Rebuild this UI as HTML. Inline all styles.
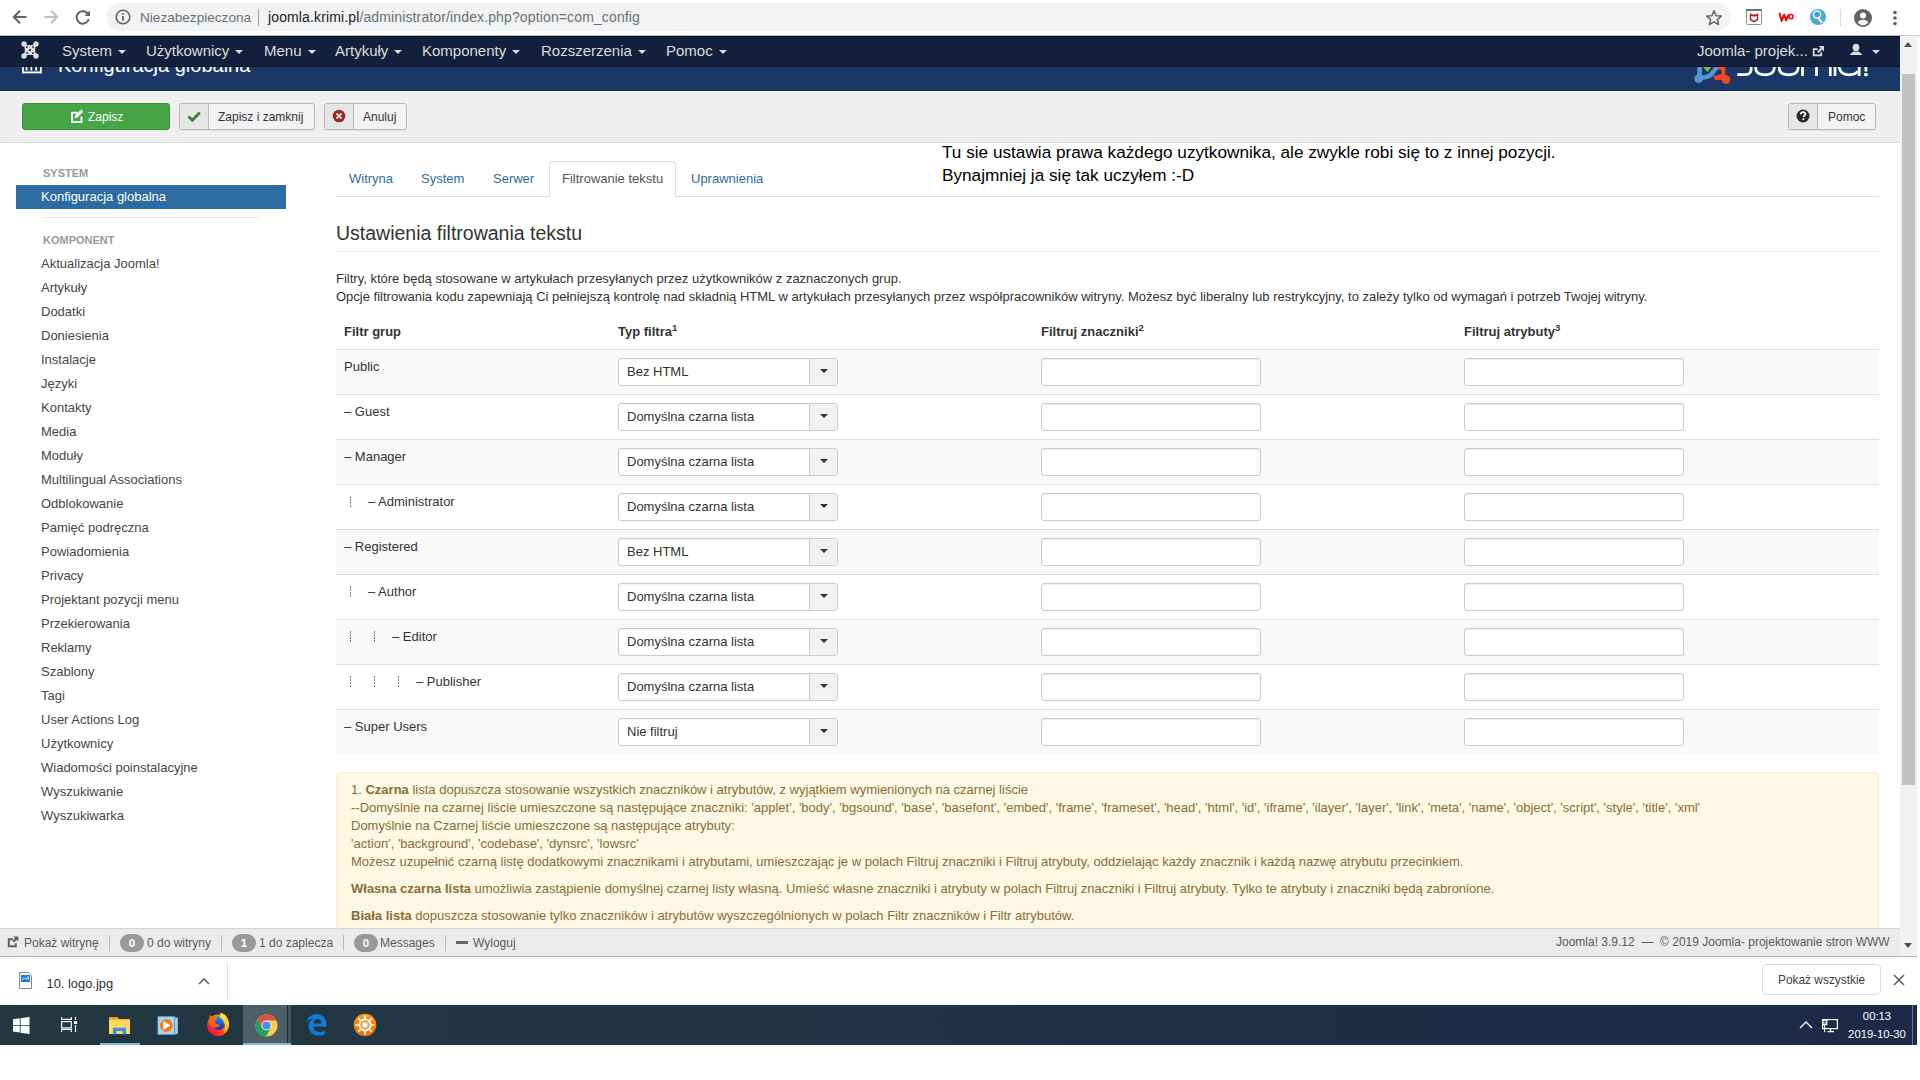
<!DOCTYPE html>
<html><head><meta charset="utf-8">
<style>
*{box-sizing:border-box;margin:0;padding:0}
html,body{width:1920px;height:1080px;overflow:hidden;background:#fff;font-family:"Liberation Sans",sans-serif;font-size:13px;color:#333}
.a{position:absolute}
.nw,.a{white-space:nowrap}
#chrome{left:0;top:0;width:1920px;height:36px;background:#fff;border-bottom:1px solid #cfcfcf}
#omni{left:106px;top:3px;width:1625px;height:28px;border-radius:14px;background:#f1f3f4}
.url{font-size:14px;color:#6b7075;top:9px;line-height:17px}
#nav{left:0;top:35px;width:1900px;height:32px;border-top:1px solid #bcbcbc;border-bottom:1px solid #0b1424;box-shadow:inset 0 1px 0 #0a1630;background:#13203b;color:#dcdcdc;font-size:15px}
.ni{top:6px;line-height:18px}
.caret{display:inline-block;width:0;height:0;border-left:4px solid transparent;border-right:4px solid transparent;border-top:4px solid #dcdcdc;vertical-align:middle;margin-left:6px;margin-top:-1px}
#hdr{left:0;top:67px;width:1900px;height:24px;background:#1b3766;border-bottom:1px solid #0c2a5a;overflow:hidden}
#sub{left:0;top:91px;width:1900px;height:52px;background:#efefef;border-top:1px solid #fcfcfa;border-bottom:1px solid #dcdcdc}
.btn{top:103px;height:27px;border:1px solid #b8b8b8;border-radius:3px;background:#f3f3f3;color:#333;font-size:12px;line-height:26px;box-shadow:0 1px 1px rgba(0,0,0,.06)}
.btn .ic{position:absolute;left:0;top:0;bottom:0;background:#e6e6e6;border-right:1px solid #b8b8b8;border-radius:3px 0 0 3px}
.btn .tx{position:absolute;top:0}
#content{left:0;top:143px;width:1900px;height:785px;background:#fff;overflow:hidden}
</style></head><body>
<div id="chrome" class="a"></div>
<div id="omni" class="a"></div>
<!-- chrome icons -->
<svg class="a" style="left:10px;top:7px" width="20" height="20" viewBox="0 0 20 20"><path d="M16.5 10H4.5M10 3.8L3.8 10L10 16.2" fill="none" stroke="#5f6368" stroke-width="2"/></svg>
<svg class="a" style="left:41px;top:7px" width="20" height="20" viewBox="0 0 20 20"><path d="M3.5 10h12M10 3.8L16.2 10L10 16.2" fill="none" stroke="#bdc1c6" stroke-width="2"/></svg>
<svg class="a" style="left:73px;top:7px" width="20" height="20" viewBox="0 0 20 20"><path d="M15.3 7.6A6.2 6.2 0 1 0 15.8 12" fill="none" stroke="#5f6368" stroke-width="2"/><path d="M17 3.5v5.5h-5.5z" fill="#5f6368"/></svg>
<svg class="a" style="left:114px;top:8px" width="18" height="18" viewBox="0 0 18 18"><circle cx="9" cy="9" r="6.8" fill="none" stroke="#5f6368" stroke-width="1.6"/><rect x="8.1" y="8" width="1.8" height="4.8" fill="#5f6368"/><rect x="8.1" y="5" width="1.8" height="1.8" fill="#5f6368"/></svg>
<div class="a url" style="left:140px;font-size:13.6px">Niezabezpieczona</div>
<div class="a" style="left:258px;top:9px;width:1px;height:17px;background:#9aa0a6"></div>
<div class="a url" style="left:268px;letter-spacing:0.13px"><span style="color:#202124">joomla.krimi.pl</span>/administrator/index.php?option=com_config</div>
<svg class="a" style="left:1704px;top:8px" width="20" height="20" viewBox="0 0 20 20"><path d="M10 2.8l2.1 4.9 5.2.4-4 3.4 1.3 5.1L10 13.8l-4.6 2.8 1.3-5.1-4-3.4 5.2-.4z" fill="none" stroke="#5f6368" stroke-width="1.5" stroke-linejoin="round"/></svg>
<svg class="a" style="left:1745px;top:8px" width="18" height="18" viewBox="0 0 18 18"><rect x="1.5" y="1.5" width="15" height="15" rx="1" fill="#fff" stroke="#84929a" stroke-width="1"/><rect x="1" y="1" width="16" height="2" fill="#60787f"/><path d="M4.8 5.3l2.6 1.3h3.2l2.6-1.3v6.6l-4.2 2.6-4.2-2.6z" fill="#b41d1d"/><path d="M6.2 7.8l1.6.8h2.4l1.6-.8v3.3l-2.8 1.7-2.8-1.7z" fill="#fff"/></svg>
<svg class="a" style="left:1778px;top:12px" width="17" height="11" viewBox="0 0 17 11"><path d="M1.6 1.6C2.2 4 2.9 6.8 3.7 9 4.6 6.5 5.5 3.8 6.2 2.6 6.9 4.3 7.5 6.5 8.2 8.4 9 6.2 9.8 4.3 10.6 3" fill="none" stroke="#f00" stroke-width="2" stroke-linecap="round" stroke-linejoin="round"/><circle cx="13" cy="4.6" r="2.1" fill="none" stroke="#f00" stroke-width="1.6"/></svg>
<svg class="a" style="left:1809px;top:8px" width="18" height="18" viewBox="0 0 18 18"><circle cx="9" cy="9" r="8" fill="#4aa8e0"/><path d="M9 9.5l6.5 4.5a8 8 0 0 1-1.6 1.8l-5.9-5.3z" fill="#9ec6df"/><circle cx="8" cy="6.5" r="3.6" fill="none" stroke="#fff" stroke-width="1.3"/><circle cx="8" cy="6.5" r="1.6" fill="#3f9ad6"/><path d="M9.5 9.8l2.6 4.2" stroke="#fff" stroke-width="2" stroke-linecap="round"/></svg>
<div class="a" style="left:1840px;top:9px;width:1px;height:17px;background:#dadce0"></div>
<svg class="a" style="left:1853px;top:8px" width="20" height="20" viewBox="0 0 20 20"><circle cx="10" cy="10" r="9" fill="#5f6368"/><circle cx="10" cy="7.6" r="3" fill="#fff"/><path d="M4.6 14.6c1.2-2 3.2-2.9 5.4-2.9s4.2.9 5.4 2.9c-1.4 1.7-3.3 2.6-5.4 2.6s-4-.9-5.4-2.6z" fill="#fff"/></svg>
<svg class="a" style="left:1891px;top:9px" width="8" height="18" viewBox="0 0 8 18"><circle cx="4" cy="3.5" r="1.8" fill="#5f6368"/><circle cx="4" cy="9" r="1.8" fill="#5f6368"/><circle cx="4" cy="14.5" r="1.8" fill="#5f6368"/></svg>

<div id="nav" class="a">
 <svg class="a" style="left:18px;top:2px" width="24" height="24" viewBox="0 0 24 24"><g fill="#dedede"><circle cx="6" cy="6" r="2.7"/><circle cx="18" cy="6" r="2.7"/><circle cx="6" cy="18" r="2.7"/><circle cx="18" cy="18" r="2.7"/><path d="M5 5.5Q12 8.8 19 5.5Q15.2 12 19 18.5Q12 15.2 5 18.5Q8.8 12 5 5.5z"/></g><g fill="#13203b"><circle cx="12" cy="12" r="1.1"/><ellipse cx="9" cy="9" rx="0.6" ry="1.3" transform="rotate(45 9 9)"/><ellipse cx="15" cy="9" rx="0.6" ry="1.3" transform="rotate(-45 15 9)"/><ellipse cx="9" cy="15" rx="0.6" ry="1.3" transform="rotate(-45 9 15)"/><ellipse cx="15" cy="15" rx="0.6" ry="1.3" transform="rotate(45 15 15)"/></g></svg>
 <div class="a ni" style="left:62px">System<span class="caret"></span></div>
 <div class="a ni" style="left:146px">Użytkownicy<span class="caret"></span></div>
 <div class="a ni" style="left:264px">Menu<span class="caret"></span></div>
 <div class="a ni" style="left:335px">Artykuły<span class="caret"></span></div>
 <div class="a ni" style="left:422px">Komponenty<span class="caret"></span></div>
 <div class="a ni" style="left:541px">Rozszerzenia<span class="caret"></span></div>
 <div class="a ni" style="left:666px">Pomoc<span class="caret"></span></div>
 <div class="a ni" style="left:1697px">Joomla- projek...</div>
 <svg class="a" style="left:1811px;top:9px" width="14" height="13" viewBox="0 0 14 13"><path d="M1.8 3.3h4.9v1.8H3.6v4.3h5.7V7.2h1.8v4H1.8z" fill="#d9d9d9"/><path d="M7.6 1H13v5.4l-1.9-1.9-3.4 3.4-1.5-1.5 3.4-3.4z" fill="#d9d9d9"/></svg>
 <svg class="a" style="left:1849px;top:6px" width="14" height="14" viewBox="0 0 14 14"><ellipse cx="7" cy="5.5" rx="3.3" ry="3.7" fill="#dedede"/><path d="M4.6 9.3Q7 10.3 9.4 9.3L12.9 12.3Q13.4 13.1 12.6 13.1H1.4Q0.6 13.1 1.1 12.3z" fill="#dedede"/></svg>
 <span class="a caret" style="left:1866px;top:15px"></span>
</div>
<div id="hdr" class="a">
 <svg class="a" style="left:21px;top:-8px" width="22" height="16" viewBox="0 0 22 16"><g fill="#fff"><rect x="1.2" y="0" width="1.7" height="14.3"/><rect x="19" y="0" width="1.7" height="14.3"/><rect x="1.2" y="12.5" width="19.5" height="1.8"/><rect x="4.7" y="0" width="1.7" height="11.6"/><rect x="9.5" y="0" width="1.7" height="11.6"/><rect x="14.3" y="0" width="1.7" height="11.6"/></g></svg>
 <div class="a" style="left:58px;top:-14px;font-size:20px;color:#fff;line-height:24px">Konfiguracja globalna</div>
 <svg class="a" style="left:1690px;top:-5px" width="190" height="26" viewBox="0 0 190 26">
<g fill="#5497d3"><rect x="7.3" y="2" width="4.6" height="12"/><circle cx="8.8" cy="16.7" r="4.4"/></g>
<path d="M8.5 15.2Q15 16.5 20 13.5L27.5 5" fill="none" stroke="#5497d3" stroke-width="4.6"/>
<path d="M13 5h8l-3.5 5z" fill="#7ac143"/>
<g fill="#f4461f"><path d="M28 4h7.5v11h-7.5z"/><circle cx="36" cy="17.6" r="4.3"/><path d="M23 13.5h13v4.5h-11z"/></g>
<circle cx="29" cy="10" r="2.6" fill="#1b3664"/>
<g fill="none" stroke="#fff" stroke-width="2.7"><path d="M61.2 2V7Q61.2 12.6 55 12.6H47.2"/><path d="M65.5 2V5Q65.5 12.8 75 12.8Q84.4 12.8 84.4 5V2"/><path d="M89 2V5Q89 12.8 98.6 12.8Q108.3 12.8 108.3 5V2"/><path d="M112.5 2V14M126.5 2V14M140.3 2V14M145 2V14M169.2 2V14M175.9 2V9.5"/><path d="M148.6 2Q149.3 12.8 158.5 12.8Q166 12.8 167.8 9"/></g>
<rect x="173.9" y="11" width="4" height="3.2" rx="1.4" fill="#fff"/>
</svg>
</div>
<div id="sub" class="a"></div>
<div class="a btn" style="left:22px;width:148px;background:#46a546;border-color:#3a8f3a;color:#fff">
 <svg class="a" style="left:46.5px;top:5px" width="14" height="14" viewBox="0 0 13 13"><path d="M1 2.5h6v1.8H2.8v6.9h6.9V7H11.5v6H1z" fill="#fff"/><path d="M10.3 0.5l2 2-5.5 5.5-2.6.6.6-2.6z" fill="#fff"/></svg>
 <div class="tx" style="left:65px">Zapisz</div>
</div>
<div class="a btn" style="left:179px;width:136px">
 <div class="ic" style="width:29px"><svg class="a" style="left:7px;top:7px" width="14" height="11" viewBox="0 0 14 11"><path d="M1.5 5.5l3.8 3.8L12.8 1.5" fill="none" stroke="#378137" stroke-width="2.8"/></svg></div>
 <div class="tx" style="left:38px">Zapisz i zamknij</div>
</div>
<div class="a btn" style="left:324px;width:83px">
 <div class="ic" style="width:29px"><svg class="a" style="left:7px;top:5px" width="14" height="14" viewBox="0 0 14 14"><circle cx="7" cy="7" r="6.3" fill="#9b2c24"/><path d="M4.5 4.5l5 5M9.5 4.5l-5 5" stroke="#fff" stroke-width="1.7"/></svg></div>
 <div class="tx" style="left:38px">Anuluj</div>
</div>
<div class="a btn" style="left:1788px;width:88px">
 <div class="ic" style="width:29px"><svg class="a" style="left:7px;top:5px" width="14" height="14" viewBox="0 0 14 14"><circle cx="7" cy="7" r="6.5" fill="#2c2c2c"/><path d="M4.8 5.3c0-1.4 1-2.2 2.3-2.2s2.2.8 2.2 2c0 1.5-1.6 1.6-1.6 3" fill="none" stroke="#fff" stroke-width="1.8"/><rect x="6.5" y="9.3" width="1.7" height="1.7" fill="#fff"/></svg></div>
 <div class="tx" style="left:39px">Pomoc</div>
</div>
<style>
.sl{left:41px;line-height:16px;color:#464646}
.th{top:324px;line-height:16px;font-weight:bold;color:#333}
.th sup{font-size:9.5px;vertical-align:top;position:relative;top:-1px;line-height:10px}
.tr{left:336px;width:1543px;height:45px;border-top:1px solid #ddd}
.dots{width:1px;height:11px;background:repeating-linear-gradient(#7a7a7a 0 2px,transparent 2px 3px)}
.sel{left:618px;width:220px;height:28px;border:1px solid #ccc;border-radius:3px;background:#fff;box-shadow:inset 0 1px 1px rgba(0,0,0,.05)}
.sel .st{position:absolute;left:8px;top:5px;line-height:16px;color:#333}
.sel .sc{position:absolute;right:0;top:0;width:28px;height:26px;border-left:1px solid #ccc;background:#f2f2f2;border-radius:0 3px 3px 0}
.sel .sc i{position:absolute;left:10px;top:10px;border-left:4px solid transparent;border-right:4px solid transparent;border-top:4px solid #333}
.inp{width:220px;height:28px;border:1px solid #ccc;border-radius:3px;background:#fff;box-shadow:inset 0 1px 1px rgba(0,0,0,.075)}
</style>
<div id="content" class="a"></div>
<div class="a" style="left:43px;top:166px;font-size:11px;line-height:14px;font-weight:bold;color:#999;letter-spacing:0">SYSTEM</div>
<div class="a" style="left:16px;top:185px;width:270px;height:24px;background:#2d6ca2"></div>
<div class="a" style="left:41px;top:189px;line-height:16px;color:#fff">Konfiguracja globalna</div>
<div class="a" style="left:43px;top:217px;width:216px;height:1px;background:#e5e5e5"></div>
<div class="a" style="left:43px;top:233px;font-size:11px;line-height:14px;font-weight:bold;color:#999">KOMPONENT</div>
<div class="a sl" style="top:256px">Aktualizacja Joomla!</div>
<div class="a sl" style="top:280px">Artykuły</div>
<div class="a sl" style="top:304px">Dodatki</div>
<div class="a sl" style="top:328px">Doniesienia</div>
<div class="a sl" style="top:352px">Instalacje</div>
<div class="a sl" style="top:376px">Języki</div>
<div class="a sl" style="top:400px">Kontakty</div>
<div class="a sl" style="top:424px">Media</div>
<div class="a sl" style="top:448px">Moduły</div>
<div class="a sl" style="top:472px">Multilingual Associations</div>
<div class="a sl" style="top:496px">Odblokowanie</div>
<div class="a sl" style="top:520px">Pamięć podręczna</div>
<div class="a sl" style="top:544px">Powiadomienia</div>
<div class="a sl" style="top:568px">Privacy</div>
<div class="a sl" style="top:592px">Projektant pozycji menu</div>
<div class="a sl" style="top:616px">Przekierowania</div>
<div class="a sl" style="top:640px">Reklamy</div>
<div class="a sl" style="top:664px">Szablony</div>
<div class="a sl" style="top:688px">Tagi</div>
<div class="a sl" style="top:712px">User Actions Log</div>
<div class="a sl" style="top:736px">Użytkownicy</div>
<div class="a sl" style="top:760px">Wiadomości poinstalacyjne</div>
<div class="a sl" style="top:784px">Wyszukiwanie</div>
<div class="a sl" style="top:808px">Wyszukiwarka</div>
<div class="a" style="left:336px;top:196px;width:1543px;height:1px;background:#ddd"></div>
<div class="a" style="left:549px;top:161px;width:127px;height:36px;background:#fff;border:1px solid #ddd;border-bottom:none;border-radius:4px 4px 0 0"></div>
<div class="a" style="left:349px;top:171px;line-height:16px;color:#2d6ca2">Witryna</div>
<div class="a" style="left:421px;top:171px;line-height:16px;color:#2d6ca2">System</div>
<div class="a" style="left:493px;top:171px;line-height:16px;color:#2d6ca2">Serwer</div>
<div class="a" style="left:562px;top:171px;line-height:16px;color:#555">Filtrowanie tekstu</div>
<div class="a" style="left:691px;top:171px;line-height:16px;color:#2d6ca2">Uprawnienia</div>
<div class="a" style="left:942px;top:141px;font-size:17.2px;line-height:22px;color:#000">Tu sie ustawia prawa każdego uzytkownika, ale zwykle robi się to z innej pozycji.</div>
<div class="a" style="left:942px;top:164px;font-size:17.2px;line-height:22px;color:#000">Bynajmniej ja się tak uczyłem :-D</div>
<div class="a" style="left:336px;top:221px;font-size:19.5px;line-height:24px;color:#333">Ustawienia filtrowania tekstu</div>
<div class="a" style="left:336px;top:251px;width:1543px;height:1px;background:#eee"></div>
<div class="a" style="left:336px;top:271px;line-height:16px">Filtry, które będą stosowane w artykułach przesyłanych przez użytkowników z zaznaczonych grup.</div>
<div class="a" style="left:336px;top:289px;line-height:16px">Opcje filtrowania kodu zapewniają Ci pełniejszą kontrolę nad składnią HTML w artykułach przesyłanych przez współpracowników witryny. Możesz być liberalny lub restrykcyjny, to zależy tylko od wymagań i potrzeb Twojej witryny.</div>
<div class="a th" style="left:344px">Filtr grup</div>
<div class="a th" style="left:618px">Typ filtra<sup>1</sup></div>
<div class="a th" style="left:1041px">Filtruj znaczniki<sup>2</sup></div>
<div class="a th" style="left:1464px">Filtruj atrybuty<sup>3</sup></div>
<div class="a tr" style="top:349px;background:#f9f9f9"></div>
<div class="a" style="left:344px;top:359px;line-height:16px">Public</div>
<div class="a sel" style="top:358px"><span class="st">Bez HTML</span><span class="sc"><i></i></span></div>
<div class="a inp" style="left:1041px;top:358px"></div>
<div class="a inp" style="left:1464px;top:358px"></div>
<div class="a tr" style="top:394px;background:#fff"></div>
<div class="a" style="left:344px;top:404px;line-height:16px">– Guest</div>
<div class="a sel" style="top:403px"><span class="st">Domyślna czarna lista</span><span class="sc"><i></i></span></div>
<div class="a inp" style="left:1041px;top:403px"></div>
<div class="a inp" style="left:1464px;top:403px"></div>
<div class="a tr" style="top:439px;background:#f9f9f9"></div>
<div class="a" style="left:344px;top:449px;line-height:16px">– Manager</div>
<div class="a sel" style="top:448px"><span class="st">Domyślna czarna lista</span><span class="sc"><i></i></span></div>
<div class="a inp" style="left:1041px;top:448px"></div>
<div class="a inp" style="left:1464px;top:448px"></div>
<div class="a tr" style="top:484px;background:#fff"></div>
<div class="a dots" style="left:350px;top:496px"></div>
<div class="a" style="left:368px;top:494px;line-height:16px">– Administrator</div>
<div class="a sel" style="top:493px"><span class="st">Domyślna czarna lista</span><span class="sc"><i></i></span></div>
<div class="a inp" style="left:1041px;top:493px"></div>
<div class="a inp" style="left:1464px;top:493px"></div>
<div class="a tr" style="top:529px;background:#f9f9f9"></div>
<div class="a" style="left:344px;top:539px;line-height:16px">– Registered</div>
<div class="a sel" style="top:538px"><span class="st">Bez HTML</span><span class="sc"><i></i></span></div>
<div class="a inp" style="left:1041px;top:538px"></div>
<div class="a inp" style="left:1464px;top:538px"></div>
<div class="a tr" style="top:574px;background:#fff"></div>
<div class="a dots" style="left:350px;top:586px"></div>
<div class="a" style="left:368px;top:584px;line-height:16px">– Author</div>
<div class="a sel" style="top:583px"><span class="st">Domyślna czarna lista</span><span class="sc"><i></i></span></div>
<div class="a inp" style="left:1041px;top:583px"></div>
<div class="a inp" style="left:1464px;top:583px"></div>
<div class="a tr" style="top:619px;background:#f9f9f9"></div>
<div class="a dots" style="left:350px;top:631px"></div>
<div class="a dots" style="left:374px;top:631px"></div>
<div class="a" style="left:392px;top:629px;line-height:16px">– Editor</div>
<div class="a sel" style="top:628px"><span class="st">Domyślna czarna lista</span><span class="sc"><i></i></span></div>
<div class="a inp" style="left:1041px;top:628px"></div>
<div class="a inp" style="left:1464px;top:628px"></div>
<div class="a tr" style="top:664px;background:#fff"></div>
<div class="a dots" style="left:350px;top:676px"></div>
<div class="a dots" style="left:374px;top:676px"></div>
<div class="a dots" style="left:398px;top:676px"></div>
<div class="a" style="left:416px;top:674px;line-height:16px">– Publisher</div>
<div class="a sel" style="top:673px"><span class="st">Domyślna czarna lista</span><span class="sc"><i></i></span></div>
<div class="a inp" style="left:1041px;top:673px"></div>
<div class="a inp" style="left:1464px;top:673px"></div>
<div class="a tr" style="top:709px;background:#f9f9f9"></div>
<div class="a" style="left:344px;top:719px;line-height:16px">– Super Users</div>
<div class="a sel" style="top:718px"><span class="st">Nie filtruj</span><span class="sc"><i></i></span></div>
<div class="a inp" style="left:1041px;top:718px"></div>
<div class="a inp" style="left:1464px;top:718px"></div>
<div class="a" style="left:336px;top:772px;width:1543px;height:200px;background:#fcf8e3;border:1px solid #fbeed5;border-radius:4px"></div>
<div class="a note" style="top:782px">1. <b>Czarna</b> lista dopuszcza stosowanie wszystkich znaczników i atrybutów, z wyjątkiem wymienionych na czarnej liście</div>
<div class="a note" style="top:800px">--Domyślnie na czarnej liście umieszczone są następujące znaczniki: 'applet', 'body', 'bgsound', 'base', 'basefont', 'embed', 'frame', 'frameset', 'head', 'html', 'id', 'iframe', 'ilayer', 'layer', 'link', 'meta', 'name', 'object', 'script', 'style', 'title', 'xml'</div>
<div class="a note" style="top:818px">Domyślnie na Czarnej liście umieszczone są następujące atrybuty:</div>
<div class="a note" style="top:836px">'action', 'background', 'codebase', 'dynsrc', 'lowsrc'</div>
<div class="a note" style="top:854px">Możesz uzupełnić czarną listę dodatkowymi znacznikami i atrybutami, umieszczając je w polach Filtruj znaczniki i Filtruj atrybuty, oddzielając każdy znacznik i każdą nazwę atrybutu przecinkiem.</div>
<div class="a note" style="top:881px"><b>Własna czarna lista</b> umożliwia zastąpienie domyślnej czarnej listy własną. Umieść własne znaczniki i atrybuty w polach Filtruj znaczniki i Filtruj atrybuty. Tylko te atrybuty i znaczniki będą zabronione.</div>
<div class="a note" style="top:908px"><b>Biała lista</b> dopuszcza stosowanie tylko znaczników i atrybutów wyszczególnionych w polach Filtr znaczników i Filtr atrybutów.</div>

<div id="status" class="a">
 <svg class="a" style="left:7px;top:7px" width="12" height="12" viewBox="0 0 12 12"><path d="M0.8 2.3h5.2v2H2.8v5h5V7.2h2V11.3H0.8z" fill="#5f5f5f"/><path d="M6.3 0.6h5v5L9.6 3.9 6.9 6.6 5.3 5 8 2.3z" fill="#5f5f5f"/></svg>
 <div class="a stx" style="left:24px">Pokaż witrynę</div>
 <div class="a ssep" style="left:109px"></div>
 <div class="a badge" style="left:120px">0</div>
 <div class="a stx" style="left:147px">0 do witryny</div>
 <div class="a ssep" style="left:221px"></div>
 <div class="a badge" style="left:232px">1</div>
 <div class="a stx" style="left:259px">1 do zaplecza</div>
 <div class="a ssep" style="left:343px"></div>
 <div class="a badge" style="left:354px">0</div>
 <div class="a stx" style="left:380px">Messages</div>
 <div class="a ssep" style="left:445px"></div>
 <div class="a" style="left:456px;top:12px;width:12px;height:3px;background:#666"></div>
 <div class="a stx" style="left:473px">Wyloguj</div>
 <div class="a stx" style="left:1556px;top:5px">Joomla! 3.9.12&nbsp; —&nbsp; © 2019 Joomla- projektowanie stron WWW</div>
</div>
<div class="a" style="left:1900px;top:956px;width:17px;height:1px;background:#b5b5b5"></div>
<div id="sb" class="a"></div>
<div id="thumb" class="a"></div>
<div class="a" style="left:1904px;top:42px;border-left:4.5px solid transparent;border-right:4.5px solid transparent;border-bottom:5px solid #505050"></div>
<div class="a" style="left:1904px;top:943px;border-left:4.5px solid transparent;border-right:4.5px solid transparent;border-top:5px solid #505050"></div>

<div id="shelf" class="a">
 <svg class="a" style="left:19px;top:15px" width="13" height="17" viewBox="0 0 13 17"><path d="M0.5 0.5h9l3 3v13h-12z" fill="#fff" stroke="#8a8a8a"/><rect x="2" y="3" width="9" height="7" fill="#1a73e8"/><path d="M3 8l2-2.5 2 2 2-3 1 3.5" fill="none" stroke="#fff" stroke-width="0.9"/></svg>
 <div class="a" style="left:46.5px;top:18.5px;font-size:12.9px;line-height:16px;color:#303134">10. logo.jpg</div>
 <svg class="a" style="left:198px;top:20px" width="12" height="8" viewBox="0 0 12 8"><path d="M1 7l5-5 5 5" fill="none" stroke="#5f6368" stroke-width="1.6"/></svg>
 <div class="a" style="left:227px;top:6px;width:1px;height:36px;background:#dadce0"></div>
 <div class="a" style="left:1762px;top:7px;width:119px;height:31px;border:1px solid #dadce0;border-radius:4px;background:#fff"></div>
 <div class="a" style="left:1778px;top:15px;font-size:11.9px;line-height:16px;color:#3c4043">Pokaż wszystkie</div>
 <svg class="a" style="left:1893px;top:17px" width="12" height="12" viewBox="0 0 12 12"><path d="M1 1l10 10M11 1L1 11" stroke="#5f6368" stroke-width="1.6"/></svg>
</div>

<div id="task" class="a">
 <svg class="a" style="left:12.5px;top:11.5px" width="17" height="17" viewBox="0 0 17 17"><path d="M0 2.3l6.8-.95v6.7H0zM7.6 1.25L16.5 0v8.05H7.6zM0 8.85h6.8v6.7L0 14.6zM7.6 8.85h8.9V17l-8.9-1.25z" fill="#fff"/></svg>
 <svg class="a" style="left:60px;top:11px" width="18" height="17" viewBox="0 0 18 17"><g fill="none" stroke="#fff" stroke-width="1.15"><path d="M1 3.4H11.9M1.6 0.9V3.4M11.3 0.9V3.4M1 13.4H11.9M1.6 13.4V16M11.3 13.4V16M15.5 1V3.9M15.5 8.9V16"/><rect x="1.6" y="5.6" width="9.7" height="6.3"/></g><rect x="14" y="5.2" width="3.1" height="2.7" fill="#fff"/></svg>
 <svg class="a" style="left:108px;top:10.5px" width="23" height="19" viewBox="0 0 23 19"><path d="M1 1h8l2 2h11v15H1z" fill="#f4bd3a"/><path d="M1 1h8l2 2H1z" fill="#e1a21f"/><path d="M1 4.5h21V18H1z" fill="#ffd865"/><path d="M5 18.5v-6.8h13v6.8h-3.4v-3.6H8.4v3.6z" fill="#3b8ee0"/></svg>
 <div class="a" style="left:100px;top:38px;width:40px;height:2px;background:#76b9ed"></div>
 <svg class="a" style="left:157px;top:11px" width="22" height="20" viewBox="0 0 22 20"><rect x="1" y="0.8" width="16.6" height="17.4" fill="#a9d5f1" stroke="#7dbce4" stroke-width="0.8"/><path d="M17.6 1.2l3.3.5v15.8l-3.3.9z" fill="#9fcde8"/><path d="M17.5 1v17.5" stroke="#4a9fd5" stroke-width="0.9"/><circle cx="9.4" cy="9.5" r="6.4" fill="#f57a1c"/><path d="M6.3 5l7.3 4.6-7.3 4.2z" fill="#fff"/></svg>
 <svg class="a" style="left:206px;top:7px" width="24" height="24" viewBox="0 0 24 24"><defs><linearGradient id="ffr" x1="0" y1="1" x2="1" y2="0"><stop offset="0" stop-color="#c5007a"/><stop offset=".3" stop-color="#ff2a2a"/><stop offset=".7" stop-color="#ff8c00"/><stop offset="1" stop-color="#ffd21a"/></linearGradient><linearGradient id="ffb" x1="0" y1="0" x2="0" y2="1"><stop offset="0" stop-color="#1591ff"/><stop offset="1" stop-color="#3322a8"/></linearGradient><linearGradient id="ffy" x1="0" y1="0" x2="0" y2="1"><stop offset="0" stop-color="#fff03a"/><stop offset="1" stop-color="#ffa900"/></linearGradient></defs><circle cx="12" cy="13.3" r="10.9" fill="url(#ffr)"/><circle cx="12.6" cy="11.3" r="6.8" fill="url(#ffb)"/><path d="M3.5 2.8L6.4 5.6 10 4.6 10.8 7.3 8.6 9 9.8 11.7 13.5 13 12.5 15 7.5 15.5 3 12z" fill="#ff6a0e"/><path d="M14.6 0.5Q21.5 3 23 10.5Q23.5 17.5 17.5 21.5Q19.8 16.2 18.6 12Q17.4 7.4 13.9 5.2z" fill="url(#ffy)"/></svg>
 <div class="a" style="left:243px;top:0;width:44px;height:40px;background:rgba(255,255,255,.2)"></div>
 <div class="a" style="left:243px;top:38px;width:44px;height:2px;background:#76b9ed"></div>
 <div class="a" style="left:287px;top:0;width:4px;height:40px;background:rgba(255,255,255,.14);border-left:1px solid #1d262b"></div>
 <div class="a" style="left:287px;top:38px;width:4px;height:2px;background:#76b9ed"></div>
 <svg class="a" style="left:255px;top:9px" width="23" height="23" viewBox="0 0 23 23"><defs><clipPath id="chc"><circle cx="11.5" cy="11.5" r="11"/></clipPath></defs><g clip-path="url(#chc)"><rect width="23" height="23" fill="#ffcd40"/><path d="M11.5 6.5H31.5V-10H-10V-3.32H-2.83L7.17 14z" fill="#de5142"/><path d="M15.83 14L5.83 31.32H-10V-3.32H-2.83L7.17 14z" fill="#1aa260"/></g><circle cx="11.5" cy="11.5" r="5.1" fill="#f1f3f4"/><circle cx="11.5" cy="11.5" r="4.1" fill="#4c8bf5"/></svg>
 <svg class="a" style="left:305px;top:8px" width="23" height="24" viewBox="0 0 23 24"><path fill-rule="evenodd" d="M0.8 9.6C2.5 4 7 1 12 1C17.5 1 21.3 5 21.3 11V13.8H8.3C8.6 17 11 19 14.5 19C16.5 19 18.3 18.5 19.8 17.6V21.2C18 22.2 16 22.6 13.5 22.6C7.5 22.6 3.5 18.5 3.5 13C3.5 9.5 5.5 6.8 8.5 5.6C5.5 6 2.8 7.5 0.8 9.6ZM8.4 10.6C8.7 7.6 10.4 6 12.6 6C14.8 6 16.4 7.6 16.4 10.6Z" fill="#1478d4"/></svg>
 <svg class="a" style="left:353px;top:8px" width="24" height="24" viewBox="0 0 24 24"><defs><linearGradient id="org" x1="0" y1="0" x2="0" y2="1"><stop offset="0" stop-color="#ff9c1c"/><stop offset="1" stop-color="#ec6c0c"/></linearGradient></defs><circle cx="12" cy="12" r="11.3" fill="url(#org)"/><g stroke="#fff" stroke-width="1.7"><path d="M12 2.5v4M12 17.5v4M2.5 12h4M17.5 12h4M5.3 5.3l2.8 2.8M15.9 15.9l2.8 2.8M18.7 5.3l-2.8 2.8M8.1 15.9l-2.8 2.8"/></g><circle cx="12" cy="12" r="5.6" fill="none" stroke="#fff" stroke-width="1.8"/><circle cx="12" cy="12" r="3.6" fill="#f7c48a"/><circle cx="12" cy="12" r="2" fill="#fff"/></svg>
 <svg class="a" style="left:1799px;top:15px" width="14" height="9" viewBox="0 0 14 9"><path d="M1 8l6-6 6 6" fill="none" stroke="#fff" stroke-width="1.3"/></svg>
 <svg class="a" style="left:1821px;top:13px" width="18" height="15" viewBox="0 0 18 15"><g fill="none" stroke="#fff" stroke-width="1.2"><rect x="1.6" y="1.6" width="14.8" height="9"/><path d="M3.6 7.2V14.2M9.6 10.6v2.6M6.6 13.6h6.4"/></g><rect x="1" y="1" width="5.4" height="6.2" fill="#fff"/><rect x="2.2" y="2.8" width="3" height="3.2" fill="#1d2a45"/><path d="M2.6 3.6v1.6h2.2V3.6" fill="none" stroke="#fff" stroke-width="0.8"/></svg>
 <div class="a" style="left:1846px;top:3px;width:62px;text-align:center;font-size:11.3px;line-height:17px;color:#fff"><div>00:13</div><div style="position:relative;top:1px">2019-10-30</div></div>
 <div class="a" style="left:1912px;top:0;width:1px;height:40px;background:#6a7690"></div>
</div>
<style>
.note{left:351px;line-height:16px;color:#8a6d3b}
.note b{font-weight:bold}
#status{left:0;top:928px;width:1900px;height:29px;background:#ebebeb;border-top:1px solid #d6d6d6;border-bottom:1px solid #b5b5b5;font-size:12px;color:#555}
.stx{top:6px;line-height:16px;color:#5a5a5a}
.ssep{top:6px;width:1px;height:16px;background:#bbb}
.badge{top:5px;width:24px;height:18px;border-radius:9px;background:#999;color:#fff;font-size:11.5px;font-weight:bold;text-align:center;line-height:18px}
#shelf{left:0;top:957px;width:1917px;height:48px;background:#fff}
#task{left:0;top:1005px;width:1917px;height:40px;background:linear-gradient(90deg,#233842 0%,#213443 35%,#1c2a47 100%)}
#sb{left:1900px;top:36px;width:17px;height:920px;background:#f1f1f1}
#thumb{left:1902px;top:74px;width:13px;height:711px;background:#c1c1c1}
</style>
</body></html>
